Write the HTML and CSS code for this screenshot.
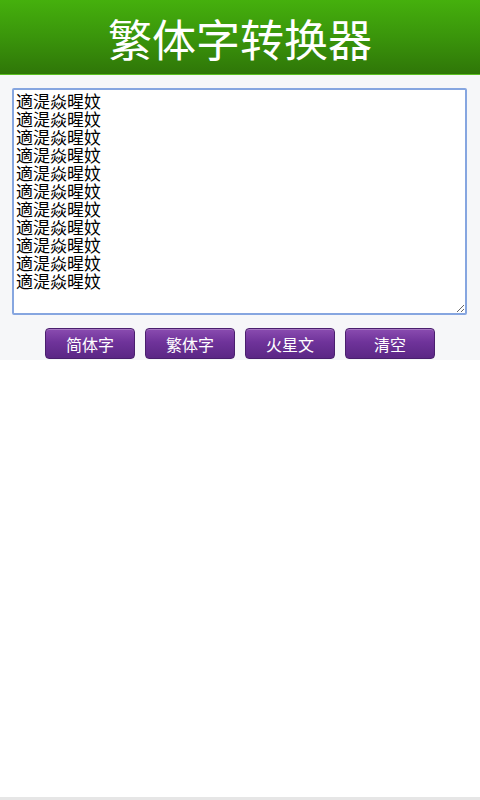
FILE: index.html
```
<!DOCTYPE html>
<html lang="zh">
<head>
<meta charset="utf-8">
<title>繁体字转换器</title>
<link rel="stylesheet" href="styles.css">
</head>
<body>
<header class="header"><h1 class="title">繁体字转换器</h1></header>
<main class="panel">
<textarea class="editor">適湜焱暒妏
適湜焱暒妏
適湜焱暒妏
適湜焱暒妏
適湜焱暒妏
適湜焱暒妏
適湜焱暒妏
適湜焱暒妏
適湜焱暒妏
適湜焱暒妏
適湜焱暒妏</textarea>
<div class="actions">
<button class="btn">简体字</button>
<button class="btn">繁体字</button>
<button class="btn">火星文</button>
<button class="btn">清空</button>
</div>
</main>
<footer class="bottom-line"></footer>
</body>
</html>
```
FILE: styles.css
```
html, body {
  margin: 0;
  padding: 0;
  background: #ffffff;
  font-family: "Liberation Sans", "Noto Sans CJK SC", sans-serif;
}
body {
  height: 800px;
  display: flex;
  flex-direction: column;
  position: relative;
}
.header {
  height: 74px;
  background: linear-gradient(to bottom, #45b00d 0%, #3a950b 50%, #2f7608 100%);
  border-bottom: 1px solid #5bbf22;
  display: flex;
  align-items: center;
  justify-content: center;
}
.title {
  margin: 0;
  color: #ffffff;
  font-family: "Noto Sans CJK SC", sans-serif;
  font-weight: 400;
  font-size: 44px;
  line-height: 1;
  padding-top: 2px;
}
.panel {
  background: #f6f7f9;
  padding: 13px 12px 1px;
}
.editor {
  display: block;
  box-sizing: border-box;
  width: 455px;
  height: 227px;
  margin: 0;
  border: 2px solid #86a6e0;
  border-radius: 2px;
  outline: none;
  padding: 2px 2px;
  background: #ffffff;
  font-family: "Noto Sans CJK SC", sans-serif;
  font-size: 17px;
  line-height: 18px;
  color: #000000;
  resize: both;
}
.actions {
  display: flex;
  justify-content: center;
  gap: 10px;
  margin-top: 13px;
}
.btn {
  width: 90px;
  height: 31px;
  box-sizing: border-box;
  border: 1px solid #4a1f6e;
  border-radius: 4px;
  background: linear-gradient(to bottom, #8a4cb0 0%, #6f339a 45%, #5b2785 100%);
  box-shadow: inset 0 1px 0 rgba(255,255,255,0.25);
  color: #ffffff;
  font-family: "Noto Sans CJK SC", sans-serif;
  font-size: 16px;
  padding: 0;
  cursor: pointer;
}
.bottom-line {
  position: absolute;
  left: 0;
  right: 0;
  bottom: 0;
  height: 3px;
  background: #e6e6e6;
}
```
